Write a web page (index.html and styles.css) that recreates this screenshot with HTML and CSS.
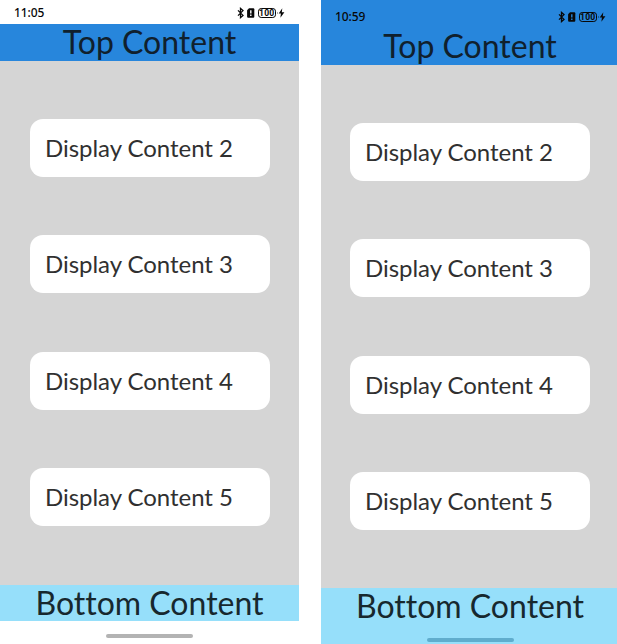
FILE: index.html
```
<!DOCTYPE html>
<html lang="en">
<head>
<meta charset="utf-8">
<title>Safe area comparison</title>
<link rel="stylesheet" href="styles.css">
</head>
<body>
<main class="comparison">
  <section class="phone">
    <div class="status">
      <span class="time">11:05</span>
      <div class="icons">
        <svg class="glyphs" viewBox="0 0 18 12"><path d="M1 3.4 6 8.4 3.5 10.6V1.4L6 3.6 1 8.6" fill="none" stroke="currentColor" stroke-width="1.3"/><path d="M12 1.3h4.3q1 0 1 1v7.4q0 1-1 1h-5.2q-1 0-1-1V3.2z" fill="currentColor"/><path class="mark" d="M13.8 3.3v3.2M13.8 7.6v1.4"/></svg>
        <span class="battery">100</span>
        <svg class="bolt" viewBox="0 0 8 12"><path d="M.2 4.8q1.2 1.2 0 2.4zM5.3 1.2 1.7 6.6h2.2L3.4 10.8 7.4 5.2H4.8z" fill="currentColor"/></svg>
      </div>
    </div>
    <header class="top"><span>Top Content</span></header>
    <div class="list">
      <div class="card">Display Content 2</div>
      <div class="card">Display Content 3</div>
      <div class="card">Display Content 4</div>
      <div class="card">Display Content 5</div>
    </div>
    <footer class="bottom"><span>Bottom Content</span></footer>
    <div class="nav"><div class="handle"></div></div>
  </section>
  <section class="phone immersive">
    <div class="status">
      <span class="time">10:59</span>
      <div class="icons">
        <svg class="glyphs" viewBox="0 0 18 12"><path d="M1 3.4 6 8.4 3.5 10.6V1.4L6 3.6 1 8.6" fill="none" stroke="currentColor" stroke-width="1.3"/><path d="M12 1.3h4.3q1 0 1 1v7.4q0 1-1 1h-5.2q-1 0-1-1V3.2z" fill="currentColor"/><path class="mark" d="M13.8 3.3v3.2M13.8 7.6v1.4"/></svg>
        <span class="battery">100</span>
        <svg class="bolt" viewBox="0 0 8 12"><path d="M.2 4.8q1.2 1.2 0 2.4zM5.3 1.2 1.7 6.6h2.2L3.4 10.8 7.4 5.2H4.8z" fill="currentColor"/></svg>
      </div>
    </div>
    <header class="top"><span>Top Content</span></header>
    <div class="list">
      <div class="card">Display Content 2</div>
      <div class="card">Display Content 3</div>
      <div class="card">Display Content 4</div>
      <div class="card">Display Content 5</div>
    </div>
    <footer class="bottom"><span>Bottom Content</span></footer>
    <div class="nav"><div class="handle"></div></div>
  </section>
</main>
</body>
</html>
```
FILE: styles.css
```
* { box-sizing: border-box; }
body { margin: 0; background: #fff; overflow: hidden; font-family: Lato, "Noto Sans", sans-serif; font-variant-ligatures: none; }
.comparison { display: grid; grid-template-columns: 299px 296px; column-gap: 22px; height: 644px; }
.phone { --bar: #fff; height: 644px; display: flex; flex-direction: column; overflow: hidden; background: var(--bar); }
.status { height: 24px; flex: none; display: flex; justify-content: space-between; align-items: center; padding: 1px 14px 0 14px; color: #080808; }
.time { font: 500 12px/16px "Noto Sans", sans-serif; letter-spacing: -.1px; }
.icons { display: flex; align-items: center; height: 12px; }
.glyphs { width: 18px; height: 12px; margin-right: 3px; }
.mark { stroke: var(--bar); stroke-width: 1.4; }
.battery { width: 18.5px; height: 10px; border: 1px solid currentColor; border-radius: 3.2px; font: 700 8.6px/9px Roboto, sans-serif; letter-spacing: .2px; text-align: center; }
.bolt { width: 8px; height: 12px; margin-left: 1px; }
.top, .bottom { flex: none; height: 36.5px; display: flex; justify-content: center; color: #10202d; font-size: 32px; line-height: 36px; letter-spacing: 0; white-space: nowrap; }
.top { background: #2786dc; }
.bottom { height: 36px; background: #96dffa; line-height: 35px; color: #17282e; }
.list { flex: 1; background: #d5d5d5; display: flex; flex-direction: column; gap: 58.5px; padding: 58.2px 29.5px 0 30px; }
.card { height: 58px; flex: none; border-radius: 13px; background: #fff; padding-left: 15px; color: #303030; font-size: 24px; line-height: 57px; letter-spacing: -.04px; white-space: nowrap; }
.nav { height: 23px; flex: none; display: flex; justify-content: center; padding-top: 13px; }
.handle { width: 87px; height: 4px; border-radius: 2px; background: #b3b3b3; }
.immersive { --bar: #2786dc; }
.immersive .status { height: 28px; padding: 5px 11px 0 14px; }
.immersive .list { padding-left: 29px; padding-right: 27px; padding-top: 58px; }
.immersive .top, .immersive .bottom { padding-left: 2px; }
.immersive .nav { height: 20px; background: #96dffa; padding: 13.5px 0 0 2px; }
.immersive .handle { background: #60adcd; }
```
